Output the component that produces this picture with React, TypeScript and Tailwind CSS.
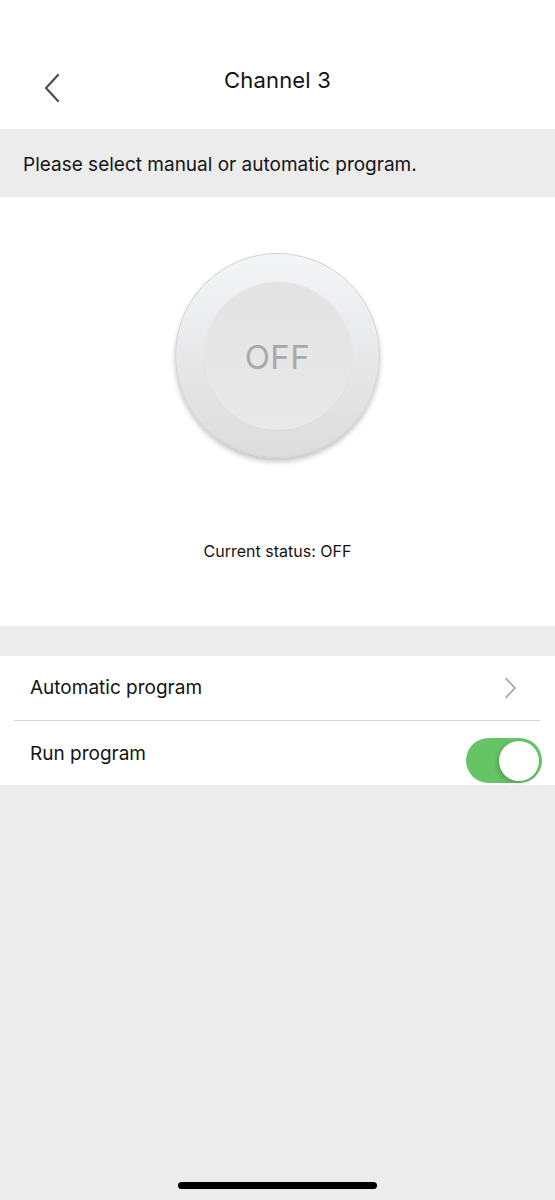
export default function App() {
  return (
    <div
      className="relative w-[555px] h-[1200px] bg-[#ececec] overflow-hidden text-[#141414]"
      style={{ fontFamily: 'Inter, "Noto Sans", sans-serif' }}
    >
      {/* header */}
      <div className="h-[129px] bg-white relative flex justify-center">
        <button className="absolute left-[39px] top-[70px] w-[26px] h-[36px] flex items-center justify-center">
          <svg width="20" height="30" viewBox="0 0 20 30" fill="none">
            <path d="M16 2 L4 15 L16 28" stroke="#4d4d4d" strokeWidth="2.2" strokeLinecap="round" strokeLinejoin="round" />
          </svg>
        </button>
        <h1 className="mt-[65px] text-[22px] leading-[30px] font-normal tracking-[0.2px]">Channel 3</h1>
      </div>

      {/* hint */}
      <div className="h-[68px] flex items-center px-[23px] pt-[3px]">
        <p className="text-[19px] leading-[24px]">Please select manual or automatic program.</p>
      </div>

      {/* power button */}
      <div className="h-[429px] bg-white flex flex-col items-center">
        <div className="mt-[56px] w-[205px] h-[205px] rounded-full border border-[#d2d2d2] bg-gradient-to-b from-[#f4f5f7] to-[#dcdcdc] shadow-[0_4px_5px_rgba(0,0,0,0.22)] flex items-center justify-center">
          <div className="w-[148px] h-[148px] pt-[3px] rounded-full bg-gradient-to-b from-[#e3e3e3] to-[#e9e9e9] shadow-[0_0_2px_rgba(0,0,0,0.06)] flex items-center justify-center">
            <span className="text-[33px] leading-none text-[#a9a9a9] tracking-[0.5px]">OFF</span>
          </div>
        </div>
        <p className="mt-[83px] text-[16px] leading-[20px]">Current status: OFF</p>
      </div>

      {/* settings */}
      <div className="mt-[30px] bg-white">
        <div className="h-[64px] flex items-center justify-between pl-[30px] pr-[38px]">
          <span className="text-[19px]">Automatic program</span>
          <svg width="13" height="22" viewBox="0 0 13 22" fill="none">
            <path d="M2 1.5 L11 11 L2 20.5" stroke="#9f9f9f" strokeWidth="1.6" strokeLinecap="round" strokeLinejoin="round" />
          </svg>
        </div>
        <div className="mx-[14px] w-[526px] h-px bg-[#d6d6d6]" />
        <div className="h-[64px] flex justify-between pl-[30px] pr-[13px]">
          <span className="mt-[21px] text-[19px] leading-[24px]">Run program</span>
          <div className="mt-[17px] w-[76px] h-[45px] rounded-full bg-[#65c466] relative">
            <div className="absolute right-[3px] top-[2.5px] w-[40px] h-[40px] rounded-full bg-white shadow-[-2px_2px_4px_rgba(0,0,0,0.18)]" />
          </div>
        </div>
      </div>

      {/* home indicator */}
      <div className="absolute left-[178px] top-[1182px] w-[199px] h-[7px] rounded-full bg-black" />
    </div>
  )
}
